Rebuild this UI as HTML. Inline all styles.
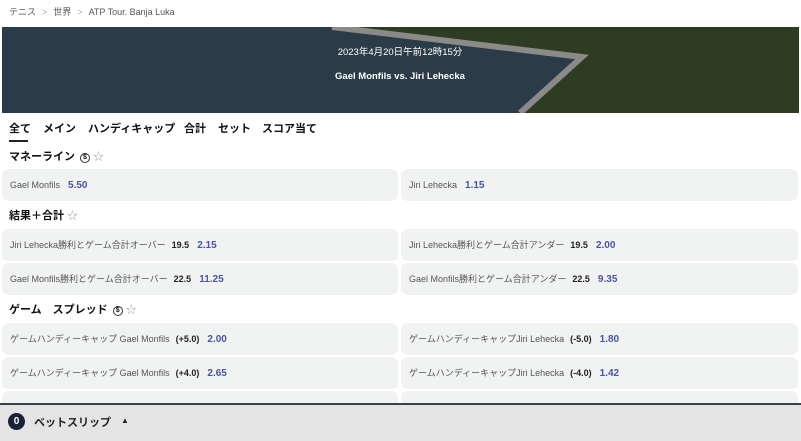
<!DOCTYPE html>
<html><head><meta charset="utf-8"><style>
*{margin:0;padding:0;box-sizing:border-box}
body{width:801px;height:441px;overflow:hidden;background:#fff;font-family:"Liberation Sans","Noto Sans CJK JP",sans-serif;color:#222;position:relative}
.a{position:absolute;white-space:nowrap}
.bc{top:5px;left:9px;font-size:9px;color:#555}
.bc span{color:#aaa;margin:0 6px}
.tabs{top:120px;left:9px;font-size:11px;color:#111;font-weight:bold}
.tabs span{position:absolute;top:0}
.ul{top:140px;left:9px;width:19px;height:2px;background:#222}
.h{font-size:11px;color:#111;left:9px;font-weight:bold}
.ic{display:inline-block;width:10px;height:10px;border:1px solid #333;border-radius:50%;font-size:7px;text-align:center;line-height:8px;vertical-align:1px;margin-left:5px}
.st{color:#aaa;font-size:11px;margin-left:3px;font-weight:normal}
.r{position:absolute;height:32px;background:#f1f2f2;border-radius:7px;font-size:9px;color:#555;line-height:32px;padding-left:8px}
.L{left:2px;width:396px}.R{left:401px;width:397px;padding-left:8px}
b.o{color:#4a55a2;margin-left:8px;font-size:10px}
b.n{color:#222;margin-left:6px;font-size:9px}
.bar{left:0;top:403px;width:801px;height:38px;background:#e4e4e4;border-top:2px solid #3a3f4a}
</style></head><body>
<div class="a bc">テニス<span>&gt;</span>世界<span>&gt;</span>ATP Tour. Banja Luka</div>
<svg class="a" style="left:2px;top:27px" width="797" height="86">
<rect width="797" height="86" fill="#2e3c23"/>
<polygon points="0,0 330,0 580,30 518,86 0,86" fill="#2b3b48"/>
<polyline points="330,0 580,30 518,86" fill="none" stroke="#8a8a86" stroke-width="6"/>
<text x="398" y="28" fill="#fff" font-size="9.5" text-anchor="middle" font-family="Liberation Sans,Noto Sans CJK JP,sans-serif">2023年4月20日午前12時15分</text>
<text x="398" y="52" fill="#fff" font-size="9.5" font-weight="bold" text-anchor="middle" font-family="Liberation Sans,sans-serif">Gael Monfils vs. Jiri Lehecka</text>
</svg>
<div class="a tabs"><span style="left:0">全て</span><span style="left:34px">メイン</span><span style="left:79px">ハンディキャップ</span><span style="left:175px">合計</span><span style="left:209px">セット</span><span style="left:253px">スコア当て</span></div>
<div class="a ul"></div>
<div class="a h" style="top:148px">マネーライン<span class="ic">$</span><span class="st">☆</span></div>
<div class="r L" style="top:169px">Gael Monfils<b class="o">5.50</b></div>
<div class="r R" style="top:169px">Jiri Lehecka<b class="o">1.15</b></div>
<div class="a h" style="top:207px">結果＋合計<span class="st">☆</span></div>
<div class="r L" style="top:229px">Jiri Lehecka勝利とゲーム合計オーバー<b class="n">19.5</b><b class="o">2.15</b></div>
<div class="r R" style="top:229px">Jiri Lehecka勝利とゲーム合計アンダー<b class="n">19.5</b><b class="o">2.00</b></div>
<div class="r L" style="top:263px">Gael Monfils勝利とゲーム合計オーバー<b class="n">22.5</b><b class="o">11.25</b></div>
<div class="r R" style="top:263px">Gael Monfils勝利とゲーム合計アンダー<b class="n">22.5</b><b class="o">9.35</b></div>
<div class="a h" style="top:301px">ゲーム　スプレッド<span class="ic">$</span><span class="st">☆</span></div>
<div class="r L" style="top:323px">ゲームハンディーキャップ Gael Monfils<b class="n">(+5.0)</b><b class="o">2.00</b></div>
<div class="r R" style="top:323px">ゲームハンディーキャップJiri Lehecka<b class="n">(-5.0)</b><b class="o">1.80</b></div>
<div class="r L" style="top:357px">ゲームハンディーキャップ Gael Monfils<b class="n">(+4.0)</b><b class="o">2.65</b></div>
<div class="r R" style="top:357px">ゲームハンディーキャップJiri Lehecka<b class="n">(-4.0)</b><b class="o">1.42</b></div>
<div class="r L" style="top:391px"></div>
<div class="r R" style="top:391px"></div>
<div class="a bar">
<div class="a" style="left:8px;top:8px;width:17px;height:17px;border-radius:50%;background:#1c2238;color:#fff;font-size:10px;font-weight:bold;text-align:center;line-height:17px">0</div>
<div class="a" style="left:34px;top:9px;font-size:11px;color:#222;font-weight:bold">ベットスリップ</div>
<div class="a" style="left:121px;top:11px;font-size:8px;color:#222">▲</div>
</div>
</body></html>
